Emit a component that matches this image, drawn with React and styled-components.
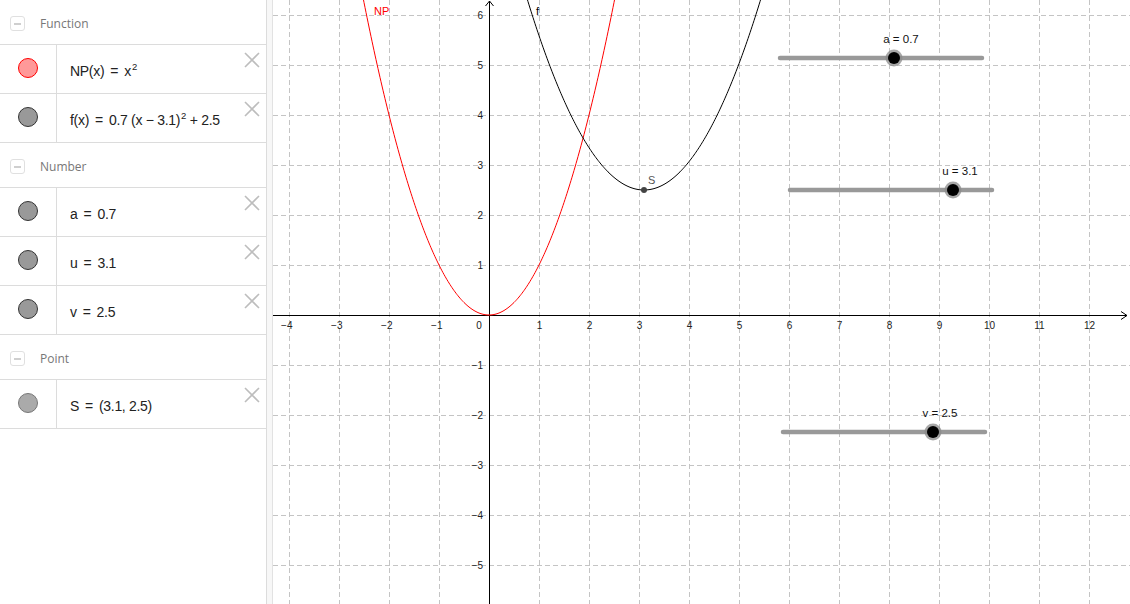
import React from "react";
import styled, { createGlobalStyle } from "styled-components";

const GlobalStyle = createGlobalStyle`
  html, body {
    margin: 0;
    padding: 0;
    background: #ffffff;
    overflow: hidden;
  }
  body {
    font-family: "Liberation Sans", Arial, sans-serif;
  }
`;

const Page = styled.div`
  display: flex;
  width: 1130px;
  height: 604px;
  background: #fff;
`;

const Sidebar = styled.div`
  width: 266px;
  flex: none;
  border-right: 1px solid #dcdcdc;
  display: flex;
  flex-direction: column;
`;

const Gutter = styled.div`
  width: 5px;
  flex: none;
  background: #f7f7f7;
  border-right: 1px solid #e2e2e2;
`;

const GraphArea = styled.div`
  flex: 1;
  display: flex;
`;

const GroupHeader = styled.div`
  height: 41px;
  padding: 3px 0 0 10px;
  border-bottom: 1px solid #dcdcdc;
  display: flex;
  align-items: center;
  gap: 15px;
`;

const CollapseBox = styled.div`
  width: 15px;
  height: 15px;
  box-sizing: border-box;
  border: 1px solid #e0e0e0;
  border-radius: 3px;
  display: flex;
  align-items: center;
  justify-content: center;
  &::after {
    content: "";
    width: 7px;
    height: 2px;
    background: #cfcfcf;
  }
`;

const GroupTitle = styled.span`
  font-family: "Open Sans", "Liberation Sans", sans-serif;
  font-size: 12px;
  color: #777;
  padding-bottom: 1px;
`;

const ItemRow = styled.div`
  height: 48px;
  border-bottom: 1px solid #dcdcdc;
  display: flex;
  align-items: stretch;
`;

const MarkerCell = styled.div`
  width: 57px;
  flex: none;
  border-right: 1px solid #dcdcdc;
  display: flex;
  align-items: center;
  justify-content: center;
  padding-bottom: 3px;
  box-sizing: border-box;
`;

const Marker = styled.div`
  width: 20px;
  height: 20px;
  box-sizing: border-box;
  border-radius: 50%;
  background: ${(p) => p.$fill};
  border: 1px solid ${(p) => p.$stroke};
`;

const ItemText = styled.div`
  flex: 1;
  display: flex;
  align-items: center;
  padding-left: 13px;
  padding-top: 3px;
  font-size: 14px;
  color: #222;
  white-space: nowrap;
`;

const Formula = styled.span`
  letter-spacing: -0.3px;
`;

const Eq = styled.span`
  margin: 0 6px;
`;

const Sup = styled.sup`
  font-size: 9.5px;
  vertical-align: 6px;
  line-height: 0;
  margin-left: 1px;
`;

const CloseButton = styled.div`
  width: 18px;
  height: 18px;
  margin: 6px 5px 0 0;
  flex: none;
  svg {
    display: block;
  }
`;

const Close = () => (
  <CloseButton>
    <svg width="18" height="18" viewBox="0 0 18 18">
      <path d="M2 2 L16 16 M16 2 L2 16" stroke="#bdbdbd" strokeWidth="1.6" fill="none" />
    </svg>
  </CloseButton>
);

const Group = ({ title }) => (
  <GroupHeader>
    <CollapseBox />
    <GroupTitle>{title}</GroupTitle>
  </GroupHeader>
);

const Item = ({ fill, stroke, children }) => (
  <ItemRow>
    <MarkerCell>
      <Marker $fill={fill} $stroke={stroke} />
    </MarkerCell>
    <ItemText>
      <Formula>{children}</Formula>
    </ItemText>
    <Close />
  </ItemRow>
);

const GREY = { fill: "#999999", stroke: "#333333" };

const sx = (x) => 489 + 50 * x;
const sy = (y) => 315 - 50 * y;

const curve = (fn, from, to, step = 0.02) => {
  let d = "";
  for (let x = from; x <= to + 1e-9; x += step) {
    d += `${d ? "L" : "M"}${sx(x).toFixed(2)},${sy(fn(x)).toFixed(2)}`;
  }
  return d;
};

const Slider = ({ x1, x2, y, thumb, label }) => (
  <g>
    <line x1={x1} y1={y} x2={x2} y2={y} stroke="#999" strokeWidth="4.5" strokeLinecap="round" />
    <circle cx={thumb} cy={y} r="8.5" fill="#8a8a8a" opacity="0.75" />
    <circle cx={thumb} cy={y} r="6" fill="#000" />
    <text x={thumb + 7} y={y - 15} fontSize="11.5" textAnchor="middle" fill="#111">
      {label}
    </text>
  </g>
);

const Graph = () => {
  const vLines = [];
  for (let k = -4; k <= 12; k++) if (k !== 0) vLines.push(sx(k));
  const hLines = [];
  for (let k = -5; k <= 6; k++) if (k !== 0) hLines.push(sy(k));

  return (
    <svg width="857" height="604" viewBox="273 0 857 604" style={{ display: "block" }}>
      <g stroke="#c4c4c4" strokeWidth="1" strokeDasharray="5 3">
        {vLines.map((x) => (
          <line key={"v" + x} x1={x + 0.5} y1="0" x2={x + 0.5} y2="604" />
        ))}
        {hLines.map((y) => (
          <line key={"h" + y} x1="273" y1={y + 0.5} x2="1130" y2={y + 0.5} />
        ))}
      </g>

      <g stroke="#000" strokeWidth="1" fill="none">
        <line x1="273" y1="315.5" x2="1127" y2="315.5" />
        <path d="M1121,311.5 L1127,315.5 L1121,319.5" />
        <line x1="489.5" y1="1" x2="489.5" y2="604" />
        <path d="M485.5,6 L489.5,1 L493.5,6" />
      </g>

      <g fontSize="10" fill="#222" fontFamily="Liberation Sans, Arial, sans-serif">
        {vLines.map((x) => {
          const k = Math.round((x - 489) / 50);
          return k < 0 ? (
            <text key={"xl" + k} x={x + 3.5} y="329" textAnchor="end">
              {"\u2212" + Math.abs(k)}
            </text>
          ) : (
            <text key={"xl" + k} x={x + 0.5} y="329" textAnchor="middle">
              {k}
            </text>
          );
        })}
        <text x="479" y="329" textAnchor="middle">0</text>
        {hLines.map((y) => {
          const k = Math.round((315 - y) / 50);
          return (
            <text key={"yl" + k} x="483" y={y + 4} textAnchor="end">
              {k < 0 ? "\u2212" + Math.abs(k) : k}
            </text>
          );
        })}
      </g>

      <path d={curve((x) => x * x, -2.62, 2.62)} stroke="#ff0000" strokeWidth="1" fill="none" />
      <path
        d={curve((x) => 0.7 * (x - 3.1) * (x - 3.1) + 2.5, 0.66, 5.54)}
        stroke="#000"
        strokeWidth="1"
        fill="none"
      />

      <text x="374" y="15" fontSize="11" fill="#ff0000">NP</text>
      <text x="536" y="15" fontSize="11" fill="#000">f</text>

      <circle cx={sx(3.1)} cy={sy(2.5)} r="3" fill="#444" />
      <text x="648" y="184" fontSize="11" fill="#555">S</text>

      <Slider x1={780} x2={982} y={58} thumb={894} label="a = 0.7" />
      <Slider x1={790} x2={992} y={190} thumb={953} label="u = 3.1" />
      <Slider x1={783} x2={985} y={432} thumb={933} label="v = 2.5" />
    </svg>
  );
};

export default function App() {
  return (
    <>
      <GlobalStyle />
      <Page>
        <Sidebar>
          <Group title="Function" />
          <Item fill="#ff9999" stroke="#ff0000">
            NP(x)<Eq>=</Eq>x<Sup>2</Sup>
          </Item>
          <Item {...GREY}>
            f(x)<Eq>=</Eq>0.7 (x − 3.1)<Sup>2</Sup> + 2.5
          </Item>
          <Group title="Number" />
          <Item {...GREY}>a<Eq>=</Eq>0.7</Item>
          <Item {...GREY}>u<Eq>=</Eq>3.1</Item>
          <Item {...GREY}>v<Eq>=</Eq>2.5</Item>
          <Group title="Point" />
          <Item fill="#aaaaaa" stroke="#777777">S<Eq>=</Eq>(3.1, 2.5)</Item>
        </Sidebar>
        <Gutter />
        <GraphArea>
          <Graph />
        </GraphArea>
      </Page>
    </>
  );
}
